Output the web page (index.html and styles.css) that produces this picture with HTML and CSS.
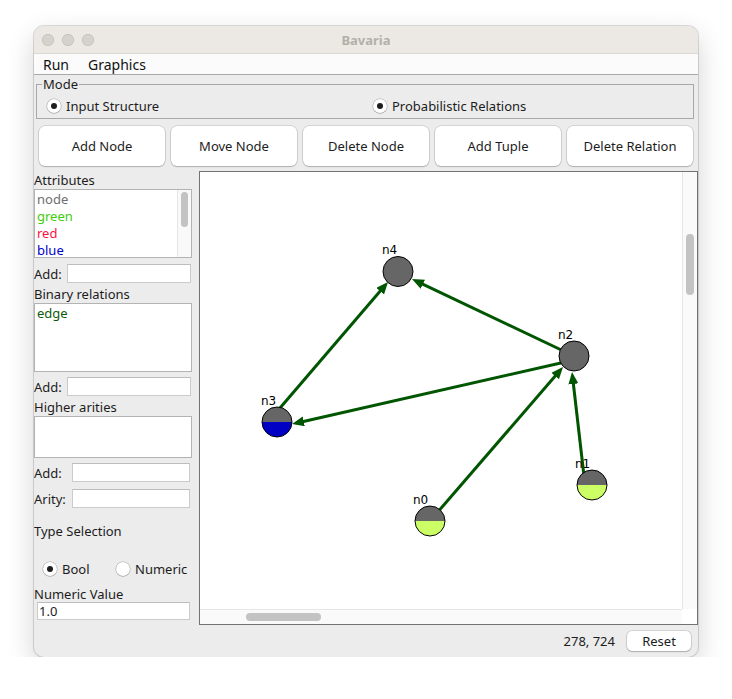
FILE: index.html
```html
<!DOCTYPE html>
<html>
<head>
<meta charset="utf-8">
<title>Bavaria</title>
<link rel="stylesheet" href="styles.css">
</head>
<body>
<div class="window">
  <div class="titlebar">
    <div class="lights"><span class="light"></span><span class="light"></span><span class="light"></span></div>
    <div class="title">Bavaria</div>
    <div></div>
  </div>
  <div class="menubar"><span>Run</span><span>Graphics</span></div>
  <div class="content">
    <fieldset class="mode">
      <legend>Mode</legend>
      <div class="mode-row">
        <div class="opt mode-first"><span class="radio on"></span>Input Structure</div>
        <div class="opt"><span class="radio on"></span>Probabilistic Relations</div>
      </div>
    </fieldset>
    <div class="buttons">
      <button class="btn">Add Node</button>
      <button class="btn">Move Node</button>
      <button class="btn">Delete Node</button>
      <button class="btn">Add Tuple</button>
      <button class="btn">Delete Relation</button>
    </div>
    <div class="main">
      <div class="side">
        <div class="lbl m1">Attributes</div>
        <div class="list attr">
          <div class="items">
            <div class="item c-node">node</div>
            <div class="item c-green">green</div>
            <div class="item c-red">red</div>
            <div class="item c-blue">blue</div>
          </div>
          <div class="vtrack"><div class="vthumb"></div></div>
        </div>
        <div class="frow m6"><span class="flbl">Add:</span><input class="field w124" type="text"></div>
        <div class="lbl m3">Binary relations</div>
        <div class="list bin">
          <div class="items"><div class="item c-edge">edge</div></div>
        </div>
        <div class="frow m5"><span class="flbl">Add:</span><input class="field w124" type="text"></div>
        <div class="lbl m3">Higher arities</div>
        <div class="list high"></div>
        <div class="frow m5"><span class="flbl wide">Add:</span><input class="field w118" type="text"></div>
        <div class="frow m7"><span class="flbl wide">Arity:</span><input class="field w118" type="text"></div>
        <div class="lbl m15">Type Selection</div>
        <div class="trow">
          <div class="opt type-first"><span class="radio on"></span>Bool</div>
          <div class="opt"><span class="radio"></span>Numeric</div>
        </div>
        <div class="lbl tight">Numeric Value</div>
        <input class="field numval" type="text" value="1.0">
      </div>
      <div class="canvas">
        <svg class="graph" width="481" height="437" viewBox="200 172 481 437" xmlns="http://www.w3.org/2000/svg">
          <defs>
            <marker id="ah" markerUnits="userSpaceOnUse" markerWidth="13" markerHeight="11" refX="6" refY="5" orient="auto">
              <path d="M0,0 L12,5 L0,10 Z" fill="#005500"/>
            </marker>
          </defs>
          <g stroke="#005500" stroke-width="3" fill="none">
            <line x1="280" y1="408" x2="384.1" y2="286.6" marker-end="url(#ah)"/>
            <line x1="574" y1="356" x2="417.4" y2="281.6" marker-end="url(#ah)"/>
            <line x1="574" y1="360" x2="297.9" y2="422.7" marker-end="url(#ah)"/>
            <line x1="430" y1="521" x2="559.1" y2="371.5" marker-end="url(#ah)"/>
            <line x1="584" y1="476" x2="572.7" y2="378" marker-end="url(#ah)"/>
          </g>
          <g stroke="#000" stroke-width="1">
            <circle cx="398" cy="271.5" r="15" fill="#666"/>
            <circle cx="574" cy="356" r="15" fill="#666"/>
            <path d="M262,422 A15,15 0 0 1 292,422 Z" fill="#666" stroke="none"/>
            <path d="M262,422 A15,15 0 0 0 292,422 Z" fill="#0000c4" stroke="none"/>
            <circle cx="277" cy="422" r="15" fill="none"/>
            <path d="M577,485 A15,15 0 0 1 607,485 Z" fill="#666" stroke="none"/>
            <path d="M577,485 A15,15 0 0 0 607,485 Z" fill="#ccff66" stroke="none"/>
            <circle cx="592" cy="485" r="15" fill="none"/>
            <path d="M415,521 A15,15 0 0 1 445,521 Z" fill="#666" stroke="none"/>
            <path d="M415,521 A15,15 0 0 0 445,521 Z" fill="#ccff66" stroke="none"/>
            <circle cx="430" cy="521" r="15" fill="none"/>
          </g>
          <g class="nlabel">
            <text x="382" y="254">n4</text>
            <text x="558" y="339">n2</text>
            <text x="261" y="405">n3</text>
            <text x="575" y="468">n1</text>
            <text x="413" y="504">n0</text>
          </g>
        </svg>
        <div class="cvtrack"><div class="cvthumb"></div></div>
        <div class="chtrack"><div class="chthumb"></div></div>
        <div class="corner"></div>
      </div>
    </div>
    <div class="status">
      <span class="coords">278, 724</span>
      <button class="reset">Reset</button>
    </div>
  </div>
</div>
</body>
</html>
```

FILE: styles.css
```css
body {
  margin: 0;
  background: #ffffff;
  font-family: "Noto Sans", "DejaVu Sans", sans-serif;
  font-size: 13px;
  color: #1c1c1c;
}

.window {
  margin: 26px 0 0 34px;
  width: 664px;
  height: 631px;
  border-radius: 10px;
  overflow: hidden;
  display: flex;
  flex-direction: column;
  background: #ececec;
  box-shadow: 0 0 0 1px rgba(0, 0, 0, 0.13), 0 10px 28px rgba(0, 0, 0, 0.18);
}

.titlebar {
  height: 27px;
  border-bottom: 1px solid #dcd8d3;
  background: #ece9e5;
  display: grid;
  grid-template-columns: 1fr auto 1fr;
  align-items: center;
}

.lights {
  display: flex;
  gap: 8px;
  padding-left: 8px;
}

.light {
  width: 12px;
  height: 12px;
  border-radius: 50%;
  background: #d5d1cd;
  box-shadow: inset 0 0 0 0.5px #bdb8b3;
}

.title {
  font-weight: 700;
  font-size: 13px;
  color: #b3afaa;
}

.menubar {
  height: 20px;
  background: #fbfbfb;
  border-bottom: 1px solid #a9a9a9;
  display: flex;
  align-items: center;
  gap: 19px;
  padding-left: 9px;
  font-size: 14px;
  color: #111;
}

.content {
  flex: 1;
  display: flex;
  flex-direction: column;
}

.mode {
  margin: 0 4px 0 2px;
  padding: 0 0 3px 0;
  border: 1px solid #a8a8a8;
  min-width: 0;
}

.mode legend {
  padding: 0 1px;
  margin-left: 5px;
  line-height: 18px;
  font-size: 13px;
}

.mode-row {
  display: flex;
  align-items: center;
  height: 18px;
  margin-top: 4px;
}

.opt {
  display: flex;
  align-items: center;
  gap: 5px;
  white-space: nowrap;
}

.mode-first {
  width: 336px;
  padding-left: 10px;
  box-sizing: border-box;
}

.radio {
  width: 14px;
  height: 14px;
  border-radius: 50%;
  background: #fff;
  box-shadow: 0 0 0 0.5px rgba(0, 0, 0, 0.28), 0 0.5px 1px rgba(0, 0, 0, 0.2);
  display: flex;
  align-items: center;
  justify-content: center;
  flex: none;
}

.radio.on::after {
  content: "";
  width: 6px;
  height: 6px;
  border-radius: 50%;
  background: #1e1e1e;
}

.buttons {
  display: flex;
  gap: 6px;
  margin: 7px 0 0 5px;
}

.btn {
  width: 126px;
  height: 40px;
  border: none;
  border-radius: 6px;
  background: #fff;
  box-shadow: 0 0 0 0.5px rgba(0, 0, 0, 0.2), 0 1px 1.5px rgba(0, 0, 0, 0.18);
  font-family: "Noto Sans", sans-serif;
  font-size: 13px;
  color: #1c1c1c;
  padding: 0;
}

.main {
  display: flex;
  margin-top: 5px;
  height: 454px;
}

.side {
  width: 165px;
  display: flex;
  flex-direction: column;
}

.lbl {
  height: 17px;
  line-height: 17px;
  white-space: nowrap;
}

.lbl.tight {
  height: 16px;
  line-height: 16px;
  margin-top: 8px;
}

.m1 { margin-top: 1px; }
.m3 { margin-top: 3px; }
.m5 { margin-top: 5px; }
.m6 { margin-top: 6px; }
.m7 { margin-top: 7px; }
.m15 { margin-top: 15px; }

.list {
  width: 158px;
  box-sizing: border-box;
  border: 1px solid #b3b3b3;
  background: #fff;
  display: flex;
  overflow: hidden;
}

.list.attr { height: 69px; }
.list.bin { height: 69px; }
.list.high { height: 42px; }

.items {
  flex: 1;
  padding-top: 1px;
}

.item {
  height: 17px;
  line-height: 17px;
  padding-left: 2px;
  font-size: 13px;
}

.c-node { color: #6e6e6e; }
.c-green { color: #3fcc0a; }
.c-red { color: #ff1040; }
.c-blue { color: #0000cc; }
.c-edge { color: #0b5a0b; }

.vtrack {
  width: 13px;
  border-left: 1px solid #e6e6e6;
  background: #f9f9f9;
}

.vthumb {
  width: 7px;
  height: 35px;
  margin: 2px 0 0 3px;
  border-radius: 4px;
  background: #c3c3c3;
}

.frow {
  display: flex;
  align-items: center;
  height: 19px;
}

.flbl {
  width: 33px;
  white-space: nowrap;
}

.flbl.wide {
  width: 38px;
}

.field {
  box-sizing: border-box;
  height: 19px;
  border: 1px solid #cbcbcb;
  border-top-color: #bdbdbd;
  background: #fff;
  padding: 0 1px;
  margin: 0;
  font-family: "Noto Sans", sans-serif;
  font-size: 13px;
  color: #1c1c1c;
  outline: none;
}

.w124 { width: 124px; }
.w118 { width: 118px; }

.trow {
  display: flex;
  align-items: center;
  height: 18px;
  margin-top: 20px;
  padding-left: 9px;
}

.type-first {
  width: 73px;
}

.numval {
  margin-left: 3px;
  width: 153px;
  height: 18px;
}

.canvas {
  width: 499px;
  box-sizing: border-box;
  border: 1px solid #737373;
  background: #fff;
  display: grid;
  grid-template-columns: 1fr 15px;
  grid-template-rows: 1fr 15px;
}

.graph {
  display: block;
}

.nlabel text {
  font-family: "DejaVu Sans", sans-serif;
  font-size: 12px;
  fill: #000;
}

.cvtrack {
  border-left: 1px solid #e6e6e6;
  background: #fafafa;
}

.cvthumb {
  width: 8px;
  height: 61px;
  margin: 62px 0 0 3px;
  border-radius: 4px;
  background: #c3c3c3;
}

.chtrack {
  border-top: 1px solid #e6e6e6;
  background: #fafafa;
}

.chthumb {
  width: 75px;
  height: 8px;
  margin: 3px 0 0 46px;
  border-radius: 4px;
  background: #c3c3c3;
}

.corner {
  background: #fff;
}

.status {
  flex: 1;
  display: flex;
  align-items: center;
  justify-content: flex-end;
  gap: 12px;
  padding-right: 7px;
}

.coords {
  font-size: 13px;
}

.reset {
  width: 64px;
  height: 20px;
  border: none;
  border-radius: 5px;
  background: #fff;
  box-shadow: 0 0 0 0.5px rgba(0, 0, 0, 0.22), 0 1px 1.5px rgba(0, 0, 0, 0.18);
  font-family: "Noto Sans", sans-serif;
  font-size: 13px;
  color: #1c1c1c;
  padding: 0;
}
```
